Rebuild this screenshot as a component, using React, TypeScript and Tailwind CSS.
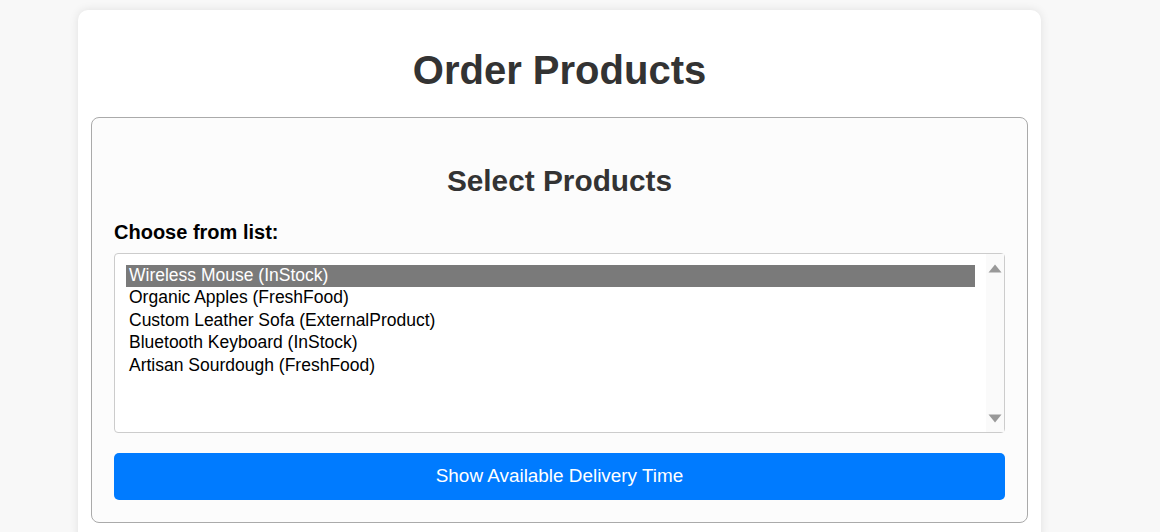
const products = [
  "Wireless Mouse (InStock)",
  "Organic Apples (FreshFood)",
  "Custom Leather Sofa (ExternalProduct)",
  "Bluetooth Keyboard (InStock)",
  "Artisan Sourdough (FreshFood)",
];

function ScrollArrow({ down = false }: { down?: boolean }) {
  return (
    <svg width="14" height="9" viewBox="0 0 14 9" className="block">
      {down ? <path d="M0.5 0.5h13L7 8.5z" fill="#999" /> : <path d="M7 0.5l6.5 8H0.5z" fill="#999" />}
    </svg>
  );
}

export default function App() {
  const selected = 0;

  return (
    <div className="min-h-[532px] bg-[#f8f8f8] pt-[10px] font-['Liberation_Sans',Arial,sans-serif]">
      <div className="ml-[78px] w-[963px] rounded-[10px] bg-white px-[13px] pt-[38px] pb-[20px] shadow-[0_0_10px_rgba(0,0,0,0.1)]">
        <h1 className="text-center text-[40px] leading-[45px] font-bold text-[#333]">Order Products</h1>

        <div className="mt-[24px] rounded-[8px] border border-[#aaa] bg-[#fcfcfc] px-[22px] pt-[46px] pb-[22px]">
          <h2 className="text-center text-[29.8px] leading-[34px] font-bold text-[#333]">Select Products</h2>

          <label className="mt-[23px] block text-[20px] leading-[22px] font-bold text-black">Choose from list:</label>

          <div className="mt-[10px] flex h-[180px] rounded-[4px] border border-[#ccc] bg-white">
            <div className="flex-1 px-[11px] pt-[11px]">
              {products.map((p, i) => (
                <div
                  key={p}
                  className={`pl-[3px] pb-px text-[17.5px] leading-[21.4px] ${
                    i === selected ? "bg-[#7a7a7a] text-white" : "text-black"
                  }`}
                >
                  {p}
                </div>
              ))}
            </div>
            <div className="flex w-[18px] flex-col items-center justify-between bg-[#fafafa] pt-[10px] pb-[9px]">
              <ScrollArrow />
              <ScrollArrow down />
            </div>
          </div>

          <button className="mt-[20px] flex h-[47px] w-full items-center justify-center rounded-[5px] bg-[#007bff] text-[18.9px] text-white">
            Show Available Delivery Time
          </button>
        </div>
      </div>
    </div>
  );
}
